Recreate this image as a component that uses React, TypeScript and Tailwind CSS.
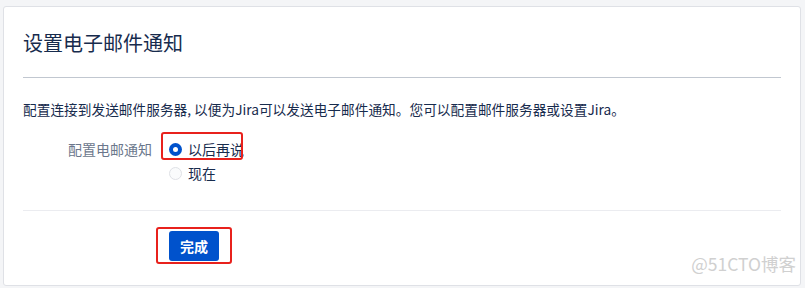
const FONT = '"Noto Sans CJK SC", "Noto Sans", sans-serif';

function Radio({ checked }: { checked: boolean }) {
  return checked ? (
    <span className="flex h-[13px] w-[13px] items-center justify-center rounded-full bg-[#0052cc]">
      <span className="block h-[5px] w-[5px] rounded-full bg-white" />
    </span>
  ) : (
    <span className="block h-[13px] w-[13px] rounded-full border-[1.5px] border-[#dfe1e6] bg-[#fafbfc]" />
  );
}

export default function App() {
  return (
    <div
      className="relative h-[288px] w-[805px] overflow-hidden bg-[#f4f5f7] pl-[3px] pt-[6px]"
      style={{ fontFamily: FONT }}
    >
      <div className="h-[280px] w-[798px] rounded-[3px] border border-[#dfe1e6] bg-white px-[19px] pt-[22px]">
        <h1 className="text-[20px] leading-[28px] text-[#172b4d]">设置电子邮件通知</h1>
        <hr className="mt-[20px] border-t border-[#c1c7d0]" />

        <p className="mt-[21px] text-[13.7px] leading-[20px] text-[#172b4d]">
          配置连接到发送邮件服务器, 以便为Jira可以发送电子邮件通知。您可以配置邮件服务器或设置Jira。
        </p>

        <div className="mt-[18px] flex">
          <div className="w-[129px] text-right text-[14px] leading-[24px] text-[#6b778c]">
            配置电邮通知
          </div>
          <div className="ml-[17px] flex flex-col">
            <label className="relative flex h-[24px] items-center gap-[6px] text-[14px] text-[#172b4d]">
              <Radio checked />
              <span>以后再说</span>
              <span className="pointer-events-none absolute left-[-8px] top-[-5px] h-[28px] w-[82px] rounded-[3px] border-2 border-[#e8211c]" />
            </label>
            <label className="flex h-[24px] items-center gap-[6px] text-[14px] text-[#172b4d]">
              <Radio checked={false} />
              <span>现在</span>
            </label>
          </div>
        </div>

        <hr className="mt-[25px] border-t border-[#ebecf0]" />

        <div className="mt-[20px] pl-[146px]">
          <div className="relative inline-block">
            <button className="h-[30px] w-[50px] rounded-[3px] bg-[#0052cc] text-[14px] font-bold text-white">
              完成
            </button>
            <span className="pointer-events-none absolute left-[-13px] top-[-4px] h-[37px] w-[76px] rounded-[3px] border-2 border-[#e8211c]" />
          </div>
        </div>
      </div>

      <span className="absolute right-[9px] top-[252px] text-[17.5px] leading-[24px] text-[#d0d0d0]">
        @51CTO博客
      </span>
    </div>
  );
}
